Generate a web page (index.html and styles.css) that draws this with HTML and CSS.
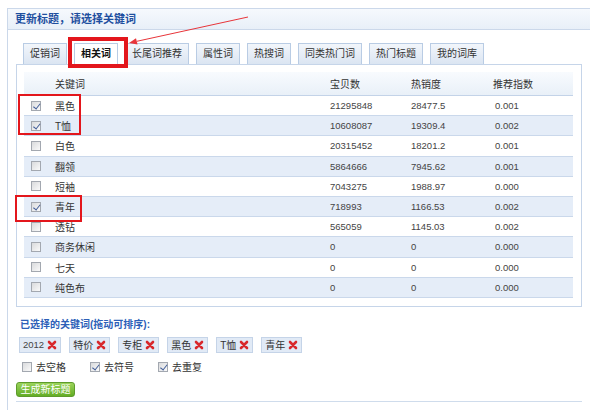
FILE: index.html
```html
<!DOCTYPE html>
<html>
<head>
<meta charset="utf-8">
<link rel="stylesheet" href="styles.css">
</head>
<body>
<div class="panel">
  <div class="panel-head">更新标题，请选择关键词</div>
  <div class="panel-body">
    <div class="tabs">
      <span class="tab">促销词</span>
      <span class="tab active">相关词</span>
      <span class="tab">长尾词推荐</span>
      <span class="tab">属性词</span>
      <span class="tab">热搜词</span>
      <span class="tab">同类热门词</span>
      <span class="tab">热门标题</span>
      <span class="tab">我的词库</span>
    </div>
    <div class="tab-box">
      <div class="grid">
        <div class="row head"><span></span><span>关键词</span><span>宝贝数</span><span>热销度</span><span>推荐指数</span></div>
        <div class="row"><span><i class="cb on"></i></span><span>黑色</span><span class="num">21295848</span><span class="num">28477.5</span><span class="num idx">0.001</span></div>
        <div class="row"><span><i class="cb on"></i></span><span>T恤</span><span class="num">10608087</span><span class="num">19309.4</span><span class="num idx">0.002</span></div>
        <div class="row"><span><i class="cb"></i></span><span>白色</span><span class="num">20315452</span><span class="num">18201.2</span><span class="num idx">0.001</span></div>
        <div class="row"><span><i class="cb"></i></span><span>翻领</span><span class="num">5864666</span><span class="num">7945.62</span><span class="num idx">0.001</span></div>
        <div class="row"><span><i class="cb"></i></span><span>短袖</span><span class="num">7043275</span><span class="num">1988.97</span><span class="num idx">0.000</span></div>
        <div class="row"><span><i class="cb on"></i></span><span>青年</span><span class="num">718993</span><span class="num">1166.53</span><span class="num idx">0.002</span></div>
        <div class="row"><span><i class="cb"></i></span><span>透钻</span><span class="num">565059</span><span class="num">1145.03</span><span class="num idx">0.002</span></div>
        <div class="row"><span><i class="cb"></i></span><span>商务休闲</span><span class="num">0</span><span class="num">0</span><span class="num idx">0.000</span></div>
        <div class="row"><span><i class="cb"></i></span><span>七天</span><span class="num">0</span><span class="num">0</span><span class="num idx">0.000</span></div>
        <div class="row"><span><i class="cb"></i></span><span>纯色布</span><span class="num">0</span><span class="num">0</span><span class="num idx">0.000</span></div>
      </div>
    </div>
    <div class="selected">
      <div class="sel-title">已选择的关键词(拖动可排序):</div>
      <div class="tags">
        <span class="tag"><span class="num">2012</span><svg class="x" viewBox="0 0 10 10"><path d="M2 2L8 8M8 2L2 8"/></svg></span>
        <span class="tag">特价<svg class="x" viewBox="0 0 10 10"><path d="M2 2L8 8M8 2L2 8"/></svg></span>
        <span class="tag">专柜<svg class="x" viewBox="0 0 10 10"><path d="M2 2L8 8M8 2L2 8"/></svg></span>
        <span class="tag">黑色<svg class="x" viewBox="0 0 10 10"><path d="M2 2L8 8M8 2L2 8"/></svg></span>
        <span class="tag">T恤<svg class="x" viewBox="0 0 10 10"><path d="M2 2L8 8M8 2L2 8"/></svg></span>
        <span class="tag">青年<svg class="x" viewBox="0 0 10 10"><path d="M2 2L8 8M8 2L2 8"/></svg></span>
      </div>
      <div class="opts">
        <span class="opt"><i class="cb"></i>去空格</span>
        <span class="opt"><i class="cb on"></i>去符号</span>
        <span class="opt"><i class="cb on"></i>去重复</span>
      </div>
      <div class="gen">生成新标题</div>
    </div>
  </div>
</div>
<div class="mark mark-tab"></div>
<div class="mark mark-rows"></div>
<div class="mark mark-row"></div>
<svg class="arrow" viewBox="0 0 130 36" width="130" height="36">
  <line x1="123" y1="5" x2="11.8" y2="29.3" stroke="#e8353a" stroke-width="1"/>
  <polygon points="4,31 12.6,32.4 11,26.3" fill="#e8353a"/>
</svg>
</body>
</html>
```

FILE: styles.css
```css
html, body {
  margin: 0;
  padding: 0;
  background: #fff;
}
body {
  position: relative;
  width: 590px;
  height: 410px;
  overflow: hidden;
  font-family: "Liberation Sans", "Noto Sans CJK SC", sans-serif;
  font-size: 10px;
  color: #333;
}
.panel {
  margin: 8px 0 0 7px;
  border-left: 1px solid #cbd8ea;
  border-top: 1px solid #cbd8ea;
  height: 402px;
}
.panel-head {
  height: 20px;
  line-height: 20px;
  padding-left: 7px;
  border-bottom: 1px solid #cbd8ea;
  background: linear-gradient(#f6f9fd, #e8eff8);
  font-size: 11px;
  font-weight: bold;
  color: #1e4f9f;
}
.panel-body {
  padding: 13px 0 0 8px;
}
.tabs {
  display: flex;
  gap: 7px;
  padding-left: 7px;
  height: 21px;
}
.tab {
  box-sizing: border-box;
  height: 21px;
  line-height: 20px;
  padding: 0 6px;
  border: 1px solid #b9cce4;
  border-bottom: none;
  background: linear-gradient(#f2f6fb, #dbe5f2);
  font-size: 10px;
  color: #333;
}
.tab.active {
  background: #fff;
  font-weight: bold;
  color: #111;
}
.tab-box {
  box-sizing: border-box;
  width: 566px;
  border: 1px solid #c6d5e9;
  padding: 7px 8px 8px 7px;
}
.row {
  display: grid;
  grid-template-columns: 31px 275px 81px 82px 1fr;
  align-items: center;
  box-sizing: border-box;
  height: 20.2px;
  border-bottom: 1px solid #cad8eb;
  background: #fff;
}
.row.head {
  height: 24px;
  background: linear-gradient(#f8fbfe, #e9f0f8);
  border-bottom: 1px solid #c3d3e8;
  color: #333;
}
.row:nth-child(odd):not(.head) {
  background: #e5edf8;
}
.row > span:first-child {
  padding-left: 7px;
  display: flex;
  align-items: center;
}
.num {
  font-size: 9.5px;
  color: #444;
}
.idx {
  padding-left: 2px;
}
.cb {
  position: relative;
  display: inline-block;
  box-sizing: border-box;
  width: 10px;
  height: 10px;
  border: 1px solid #a3a8b0;
  background: linear-gradient(135deg, #d9dadc, #fafafa);
}
.cb.on::after {
  content: "";
  position: absolute;
  left: 2.5px;
  top: 0;
  width: 2.5px;
  height: 5.5px;
  border-right: 1.3px solid #45609a;
  border-bottom: 1.3px solid #45609a;
  transform: rotate(38deg);
}
.selected {
  box-sizing: border-box;
  width: 566px;
  padding: 12px 0 4px 0;
  border-bottom: 1px solid #cfdcec;
}
.sel-title {
  padding-left: 4px;
  height: 12px;
  line-height: 12px;
  font-weight: bold;
  color: #2d5fb8;
}
.tags {
  display: flex;
  gap: 8px;
  padding-left: 3px;
  margin-top: 6px;
}
.tag {
  display: inline-flex;
  align-items: center;
  gap: 3px;
  box-sizing: border-box;
  height: 16px;
  padding: 0 3px;
  border: 1px solid #c5d4e8;
  background: #e1eaf6;
  color: #333;
}
.x {
  width: 10px;
  height: 10px;
}
.x path {
  stroke: #d8282c;
  stroke-width: 2.6;
  stroke-linecap: round;
  fill: none;
}
.opts {
  display: flex;
  margin-top: 8px;
  padding-left: 6px;
  height: 12px;
  align-items: center;
}
.opt {
  display: inline-flex;
  align-items: center;
  gap: 4px;
  width: 68px;
}
.gen {
  margin-top: 9px;
  box-sizing: border-box;
  width: 59px;
  height: 15px;
  line-height: 13px;
  text-align: center;
  border: 1px solid #5e9b2c;
  border-radius: 3px;
  background: linear-gradient(#9ad35a, #63ad25);
  color: #fff;
  font-size: 10px;
}
.mark {
  position: absolute;
  box-sizing: border-box;
  border: 2px solid #e3161c;
}
.mark-tab {
  left: 68px;
  top: 37px;
  width: 60px;
  height: 31px;
  border-width: 4px;
}
.mark-rows {
  left: 18px;
  top: 94px;
  width: 63px;
  height: 41px;
}
.mark-row {
  left: 15px;
  top: 195px;
  width: 67px;
  height: 27px;
}
.arrow {
  position: absolute;
  left: 125px;
  top: 12px;
}
```
